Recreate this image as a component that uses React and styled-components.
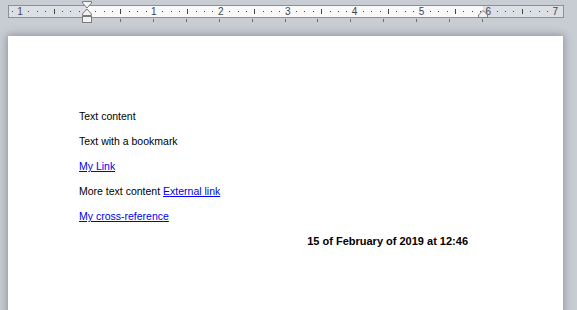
import React from 'react';
import styled, { createGlobalStyle } from 'styled-components';

const GlobalStyle = createGlobalStyle`
  html, body {
    margin: 0;
    padding: 0;
    overflow: hidden;
  }
`;

const INCH = 66.9;
const ZERO = 78; // left indent, measured from the ruler's inner edge

const Screen = styled.div`
  width: 577px;
  height: 310px;
  overflow: hidden;
  background: #c8ccd3;
  padding-top: 5px;
  box-sizing: border-box;
  font-family: "Liberation Sans", Arial, sans-serif;
`;

const Ruler = styled.div`
  position: relative;
  display: flex;
  margin-left: 8px;
  width: 556px;
  height: 13px;
  border: 1px solid #8c8f94;
  box-sizing: border-box;
`;

const Zone = styled.div`
  flex: ${p => (p.$grow ? '1' : `0 0 ${p.$width}px`)};
  background: ${p => (p.$active ? '#f9f9f9' : '#dcdfe4')};
`;

const Dot = styled.span`
  position: absolute;
  top: 5px;
  width: 1px;
  height: 1px;
  background: #444;
`;

const Bar = styled.span`
  position: absolute;
  top: 3px;
  width: 1px;
  height: 5px;
  background: #444;
`;

const Num = styled.span`
  position: absolute;
  top: -1px;
  transform: translateX(-50%);
  font-size: 10px;
  line-height: 13px;
  color: #41454b;
`;

const TabStop = styled.span`
  position: absolute;
  top: 13px;
  width: 1px;
  height: 3px;
  background: #6e6e6e;
`;

const Marker = styled.svg`
  position: absolute;
  overflow: visible;
`;

const Page = styled.div`
  margin: 18px 0 0 8px;
  width: 555px;
  height: 300px;
  background: #ffffff;
  box-shadow: 0 0 8px 1px rgba(70, 76, 88, 0.45);
  padding: 68px 80px 0 71px;
  box-sizing: border-box;
`;

const Para = styled.p`
  margin: 0;
  font-size: 10.5px;
  line-height: 25px;
  color: #000;
  white-space: nowrap;
`;

const Link = styled.a`
  color: #0000ee;
  text-decoration: underline;
`;

const DateLine = styled.p`
  margin: 0;
  padding-right: 15px;
  text-align: right;
  font-size: 11px;
  font-weight: bold;
  line-height: 24px;
  color: #000;
`;

function RulerScale() {
  const marks = [];
  for (let n = -9; n <= 57; n++) {
    const x = ZERO + (n * INCH) / 8;
    if (x < 2 || x > 552) continue;
    if (n === 0) continue;
    if (n % 8 === 0) {
      marks.push(<Num key={n} style={{ left: x }}>{Math.abs(n / 8)}</Num>);
    } else if (n % 4 === 0) {
      marks.push(<Bar key={n} style={{ left: Math.round(x) }} />);
    } else {
      marks.push(<Dot key={n} style={{ left: Math.round(x) }} />);
    }
  }
  const tabs = [];
  for (let i = 0; i < 12; i++) {
    tabs.push(<TabStop key={'t' + i} style={{ left: Math.round(111 + i * 32.9) }} />);
  }
  return (
    <>
      {marks}
      {tabs}
    </>
  );
}

export default function App() {
  return (
    <Screen>
      <GlobalStyle />
      <Ruler>
        <Zone $width={78} />
        <Zone $width={396} $active />
        <Zone $grow />
        <RulerScale />
        <Marker width="11" height="23" viewBox="0 0 11 23" style={{ left: 73, top: -5 }}>
          <path d="M0.5 0.5 H9.5 V2 L5 7 L0.5 2 Z" fill="#f2f2f2" stroke="#7a7a7a" />
          <path d="M5 8 L9.5 13 V14.5 H0.5 V13 Z" fill="#f2f2f2" stroke="#7a7a7a" />
          <rect x="0.5" y="15.5" width="9" height="6" fill="#f2f2f2" stroke="#7a7a7a" />
        </Marker>
        <Marker width="10" height="8" viewBox="0 0 10 8" style={{ left: 469, top: 4 }}>
          <path d="M5 0.5 L9.5 5 V7.5 H0.5 V5 Z" fill="#f2f2f2" stroke="#7a7a7a" />
        </Marker>
      </Ruler>
      <Page>
        <Para>Text content</Para>
        <Para>Text with a bookmark</Para>
        <Para><Link href="#bm">My Link</Link></Para>
        <Para>More text content <Link href="#ext">External link</Link></Para>
        <Para><Link href="#bm">My cross-reference</Link></Para>
        <DateLine>15 of February of 2019 at 12:46</DateLine>
      </Page>
    </Screen>
  );
}
